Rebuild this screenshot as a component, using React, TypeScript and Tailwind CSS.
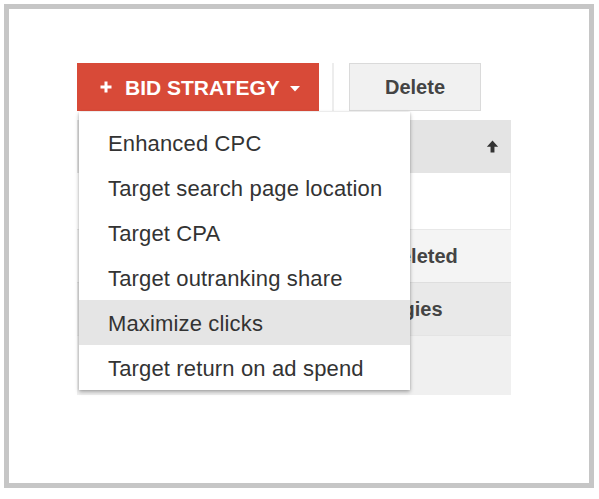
const menuItems = [
  "Enhanced CPC",
  "Target search page location",
  "Target CPA",
  "Target outranking share",
  "Maximize clicks",
  "Target return on ad spend",
];

export default function App() {
  return (
    <div className="h-[499px] w-[599px] bg-white pl-1 pt-1 font-['Liberation_Sans',Arial,sans-serif]">
      <div className="relative h-[484px] w-[590px] border-[5px] border-[#c6c6c6] bg-white pl-[68px] pt-[54px]">
        {/* toolbar */}
        <div className="flex h-12 items-stretch">
          <button className="flex w-[242px] items-center bg-[#d84a38] pl-[23px] text-[21px] font-bold text-white">
            <svg width="12" height="12" viewBox="0 0 12 12" className="shrink-0">
              <path d="M6 0.5v11M0.5 6h11" stroke="white" strokeWidth="3" />
            </svg>
            <span className="ml-[13px] leading-none">BID STRATEGY</span>
            <svg width="10" height="6" viewBox="0 0 10 6" className="ml-[10px] mt-[3px] shrink-0">
              <path d="M0 0h10L5 5.5z" fill="white" />
            </svg>
          </button>
          <div className="ml-[13px] w-[2px] bg-[#ededed]" />
          <button className="ml-[15px] w-[132px] border border-[#dadada] bg-[#f1f1f1] text-[20px] font-bold text-[#444]">
            Delete
          </button>
        </div>

        {/* table */}
        <div className="mt-[9px] w-[434px] text-[20px] font-bold text-[#444]">
          <div className="flex h-[53px] items-center justify-end bg-[#e4e4e4] pr-[12px]">
            <svg width="13" height="13" viewBox="0 0 12 12">
              <path d="M6 0.5L0.8 6.2h3.4V11.5h3.6V6.2h3.4z" fill="#333" />
            </svg>
          </div>
          <div className="h-[56px] border-r border-[#ececec] bg-white" />
          <div className="flex h-[53px] items-center border-t border-[#e8e8e8] bg-[#f4f4f4]">
            <span className="ml-[243px]">All but deleted</span>
          </div>
          <div className="flex h-[53px] items-center border-t border-[#dedede] bg-[#e9e9e9]">
            <span className="ml-[240px]">All strategies</span>
          </div>
          <div className="h-[60px] border-t border-[#e4e4e4] bg-[#f0f0f0]" />
        </div>

        {/* dropdown menu */}
        <div className="absolute left-[70px] top-[103px] w-[331px] bg-white pt-2 shadow-[0_2px_4px_rgba(0,0,0,0.3),0_0_2px_rgba(0,0,0,0.12)]">
          {menuItems.map((item) => (
            <div
              key={item}
              className={
                "flex h-[45px] items-center pl-[29px] pt-[2px] text-[22px] tracking-[0.15px] text-[#333] " +
                (item === "Maximize clicks" ? "bg-[#e5e5e5]" : "")
              }
            >
              {item}
            </div>
          ))}
        </div>
      </div>
    </div>
  );
}
